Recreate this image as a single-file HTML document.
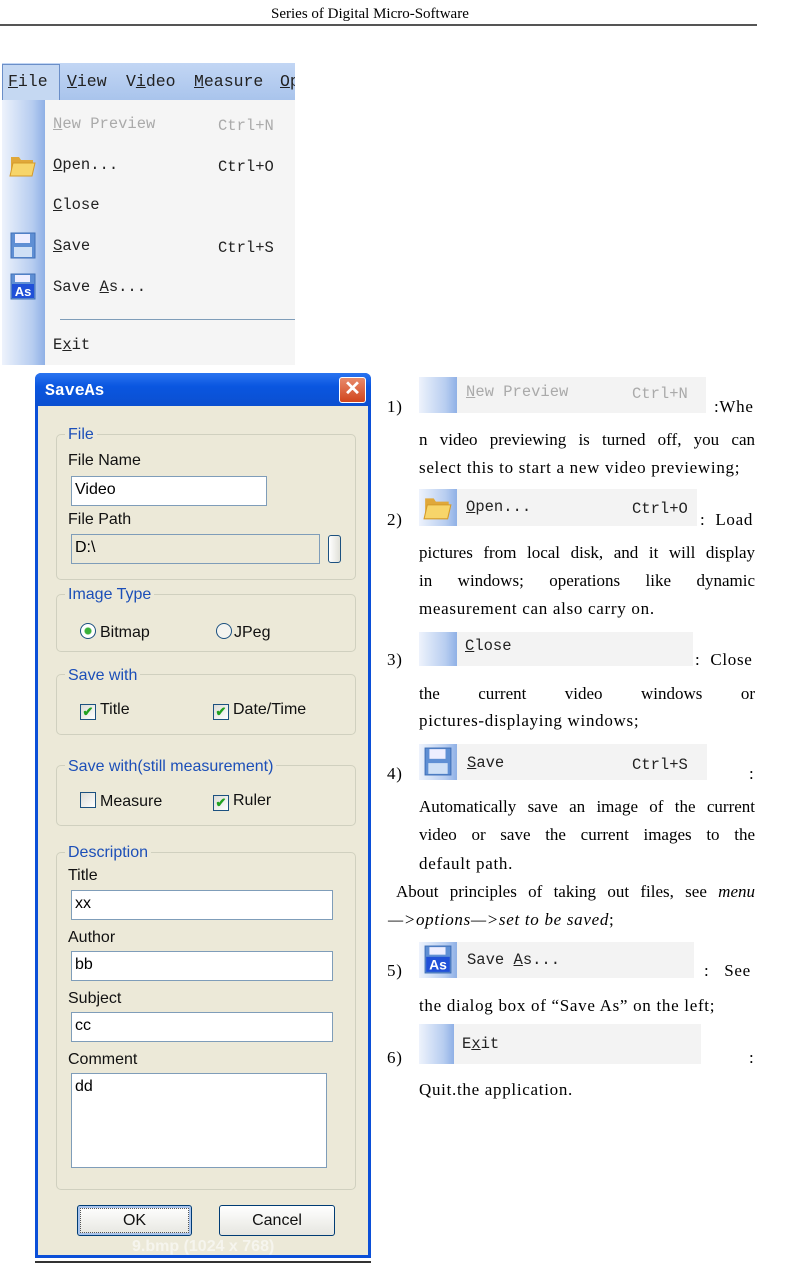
<!DOCTYPE html>
<html><head><meta charset="utf-8"><style>
*{margin:0;padding:0;box-sizing:border-box}
body{width:800px;height:1264px;background:#fff;position:relative;overflow:hidden;font-family:"Liberation Serif",serif;color:#000}
.a{position:absolute;white-space:nowrap}
.mono{font-family:"Liberation Mono",monospace;font-size:15.5px;color:#222}
.ser{font-family:"Liberation Serif",serif;font-size:17px;letter-spacing:0.7px}
.sans{font-family:"Liberation Sans",sans-serif;font-size:16px;color:#111}
.blue{color:#1c4fb8}
.grp{position:absolute;border:1px solid #d0d0bf;border-radius:5px}
.inp{position:absolute;background:#fff;border:1px solid #7f9db9;font-family:"Liberation Sans",sans-serif;font-size:16px;padding:4px 3px}
.strip{position:absolute;background:#f3f3f3}
.strip .l{position:absolute;left:0;top:0;bottom:0;width:38px;background:linear-gradient(90deg,#eef3fc,#b7cdf0 70%,#8fb0e6)}
.just{position:absolute;left:419px;width:336px;text-align:justify;text-align-last:justify;font-size:17px;white-space:nowrap}
.cb{display:inline-block;width:16px;height:16px;border:1px solid #1c5180;background:linear-gradient(135deg,#dcdcd6,#fff);vertical-align:-2px;margin-right:4px;position:relative}
</style></head><body>

<div class="a ser" style="left:271px;top:6px;font-size:15px;letter-spacing:0">Series of Digital Micro-Software</div>
<div class="a" style="left:0;top:24px;width:757px;height:2px;background:#555"></div>

<!-- File menu -->
<div class="a" style="left:2px;top:63px;width:293px;height:37px;background:linear-gradient(#c2d6f4,#a9c4ec)"></div>
<div class="a" style="left:2px;top:64px;width:58px;height:37px;background:#c5d8f2;border:1px solid #6b8fc8;border-bottom:none"></div>
<div class="a mono" style="left:8px;top:72px;font-size:16.5px"><u>F</u>ile</div>
<div class="a mono" style="left:67px;top:72px;font-size:16.5px"><u>V</u>iew</div>
<div class="a mono" style="left:126px;top:72px;font-size:16.5px">V<u>i</u>deo</div>
<div class="a mono" style="left:194px;top:72px;font-size:16.5px"><u>M</u>easure</div>
<div class="a mono" style="left:280px;top:72px;font-size:16.5px;width:15px;overflow:hidden"><u>O</u>p</div>
<div class="a" style="left:2px;top:100px;width:293px;height:265px;background:#f5f5f5"></div>
<div class="a" style="left:2px;top:100px;width:43px;height:265px;background:linear-gradient(90deg,#eef3fc,#b7cdf0 70%,#8fb0e6)"></div>
<div class="a mono" style="left:53px;top:115px;color:#aaa"><u>N</u>ew Preview</div>
<div class="a mono" style="left:218px;top:117px;color:#aaa">Ctrl+N</div>
<svg class="a" style="left:9px;top:151px" width="28" height="28" viewBox="0 0 28 28"><path d="M2 6h8l2 3h12v14H2z" fill="#e0a83a"/><path d="M4 12h22l-3 13H1z" fill="#f7d56a" stroke="#d49a2a"/></svg>
<div class="a mono" style="left:53px;top:156px"><u>O</u>pen...</div>
<div class="a mono" style="left:218px;top:158px">Ctrl+O</div>
<div class="a mono" style="left:53px;top:196px"><u>C</u>lose</div>
<svg class="a" style="left:10px;top:232px" width="26" height="27" viewBox="0 0 26 27"><rect x="1" y="1" width="24" height="25" fill="#5f8fd4" stroke="#4070b8"/><rect x="5" y="2" width="15" height="9" fill="#eef"/><rect x="4" y="15" width="18" height="10" fill="#cfe0f6"/></svg>
<div class="a mono" style="left:53px;top:237px"><u>S</u>ave</div>
<div class="a mono" style="left:218px;top:239px">Ctrl+S</div>
<svg class="a" style="left:10px;top:273px" width="26" height="27" viewBox="0 0 26 27"><rect x="1" y="1" width="24" height="25" fill="#5f8fd4" stroke="#4070b8"/><rect x="5" y="2" width="15" height="7" fill="#eef"/><rect x="2" y="11" width="22" height="14" fill="#2050d8"/><text x="13" y="23" font-family="Liberation Sans" font-weight="bold" font-size="13" fill="#fff" text-anchor="middle">As</text></svg>
<div class="a mono" style="left:53px;top:278px">Save <u>A</u>s...</div>
<div class="a" style="left:60px;top:319px;width:235px;height:1px;background:#7f9db9"></div>
<div class="a mono" style="left:53px;top:336px">E<u>x</u>it</div>

<!-- Dialog -->
<div class="a" style="left:35px;top:373px;width:336px;height:885px;background:#0b4fd8;border-radius:6px 6px 0 0"></div>
<div class="a" style="left:35px;top:373px;width:336px;height:33px;background:linear-gradient(#2a74f0,#0a56e0 40%,#0b4fd0);border-radius:6px 6px 0 0"></div>
<div class="a" style="left:45px;top:381px;color:#fff;font-family:'Liberation Mono',monospace;font-weight:bold;font-size:16.5px">SaveAs</div>
<div class="a" style="left:339px;top:377px;width:27px;height:26px;background:linear-gradient(#e88a6a,#d1451d);border:1px solid #fff;border-radius:3px;color:#fff;font:bold 20px/22px 'Liberation Sans',sans-serif;text-align:center">✕</div>
<div class="a" style="left:38px;top:406px;width:330px;height:849px;background:#ece9d8"></div>

<div class="grp" style="left:56px;top:434px;width:300px;height:146px"></div>
<div class="a sans blue" style="left:65px;top:426px;background:#ece9d8;padding:0 3px">File</div>
<div class="a sans" style="left:68px;top:452px">File Name</div>
<div class="inp" style="left:71px;top:476px;width:196px;height:30px">Video</div>
<div class="a sans" style="left:68px;top:511px">File Path</div>
<div class="inp" style="left:71px;top:534px;width:249px;height:30px;background:#ece9d8">D:\</div>
<div class="a" style="left:328px;top:535px;width:13px;height:28px;border:1px solid #1c5180;border-radius:3px;background:linear-gradient(90deg,#fff,#e0e0d8)"></div>

<div class="grp" style="left:56px;top:594px;width:300px;height:58px"></div>
<div class="a sans blue" style="left:65px;top:586px;background:#ece9d8;padding:0 3px">Image Type</div>
<div class="a sans" style="left:80px;top:623px"><span style="display:inline-block;width:16px;height:16px;border:1px solid #1c5180;border-radius:50%;background:radial-gradient(#3bb13b 0 3px,#fff 4px);vertical-align:-2px;margin-right:4px"></span>Bitmap</div>
<div class="a sans" style="left:216px;top:623px"><span style="display:inline-block;width:16px;height:16px;border:1px solid #1c5180;border-radius:50%;background:#f4f4f0;vertical-align:-2px;margin-right:2px"></span>JPeg</div>

<div class="grp" style="left:56px;top:674px;width:300px;height:61px"></div>
<div class="a sans blue" style="left:65px;top:667px;background:#ece9d8;padding:0 3px">Save with</div>
<div class="a sans" style="left:80px;top:701px"><span class="cb" style="color:#21a121;font:bold 13px/14px sans-serif;text-align:center">✔</span>Title</div>
<div class="a sans" style="left:213px;top:701px"><span class="cb" style="color:#21a121;font:bold 13px/14px sans-serif;text-align:center">✔</span>Date/Time</div>

<div class="grp" style="left:56px;top:765px;width:300px;height:61px"></div>
<div class="a sans blue" style="left:65px;top:758px;background:#ece9d8;padding:0 3px">Save with(still measurement)</div>
<div class="a sans" style="left:80px;top:792px"><span class="cb"></span>Measure</div>
<div class="a sans" style="left:213px;top:792px"><span class="cb" style="color:#21a121;font:bold 13px/14px sans-serif;text-align:center">✔</span>Ruler</div>

<div class="grp" style="left:56px;top:852px;width:300px;height:338px"></div>
<div class="a sans blue" style="left:65px;top:844px;background:#ece9d8;padding:0 3px">Description</div>
<div class="a sans" style="left:68px;top:867px">Title</div>
<div class="inp" style="left:71px;top:890px;width:262px;height:30px">xx</div>
<div class="a sans" style="left:68px;top:929px">Author</div>
<div class="inp" style="left:71px;top:951px;width:262px;height:30px">bb</div>
<div class="a sans" style="left:68px;top:990px">Subject</div>
<div class="inp" style="left:71px;top:1012px;width:262px;height:30px">cc</div>
<div class="a sans" style="left:68px;top:1051px">Comment</div>
<div class="inp" style="left:71px;top:1073px;width:256px;height:95px">dd</div>

<div class="a sans" style="left:77px;top:1205px;width:115px;height:31px;border:1px solid #003c74;border-radius:3px;background:linear-gradient(#fff,#e6e6e0);text-align:center;line-height:29px;outline:1px dotted #555;outline-offset:-4px;box-shadow:inset 0 0 0 2px #a9c4ec">OK</div>
<div class="a sans" style="left:219px;top:1205px;width:116px;height:31px;border:1px solid #003c74;border-radius:3px;background:linear-gradient(#fff,#e6e6e0);text-align:center;line-height:29px">Cancel</div>
<div class="a sans" style="left:132px;top:1238px;color:#f6f5ee;font-weight:bold">9.bmp (1024 x 768)</div>
<div class="a" style="left:35px;top:1261px;width:336px;height:2px;background:#333"></div>

<!-- Right column -->
<div class="strip" style="left:419px;top:377px;width:287px;height:36px"><div class="l"></div></div>
<div class="a mono" style="left:466px;top:383px;color:#aaa"><u>N</u>ew Preview</div>
<div class="a mono" style="left:632px;top:385px;color:#aaa">Ctrl+N</div>
<div class="a ser" style="left:387px;top:397px">1)</div>
<div class="a ser" style="left:714px;top:397px">:Whe</div>
<div class="just" style="top:430px">n video previewing is turned off, you can</div>
<div class="a ser" style="left:419px;top:458px">select this to start a new video previewing;</div>

<div class="strip" style="left:419px;top:489px;width:278px;height:37px"><div class="l"></div></div>
<svg class="a" style="left:423px;top:492px" width="30" height="30" viewBox="0 0 28 28"><path d="M2 6h8l2 3h12v14H2z" fill="#e0a83a"/><path d="M4 12h22l-3 13H1z" fill="#f7d56a" stroke="#d49a2a"/></svg>
<div class="a mono" style="left:466px;top:498px"><u>O</u>pen...</div>
<div class="a mono" style="left:632px;top:500px">Ctrl+O</div>
<div class="a ser" style="left:387px;top:510px">2)</div>
<div class="a ser" style="left:700px;top:510px">:&nbsp; Load</div>
<div class="just" style="top:543px">pictures from local disk, and it will display</div>
<div class="just" style="top:571px">in windows; operations like dynamic</div>
<div class="a ser" style="left:419px;top:599px">measurement can also carry on.</div>

<div class="strip" style="left:419px;top:632px;width:274px;height:34px"><div class="l"></div></div>
<div class="a mono" style="left:465px;top:637px"><u>C</u>lose</div>
<div class="a ser" style="left:387px;top:650px">3)</div>
<div class="a ser" style="left:695px;top:650px">:&nbsp; Close</div>
<div class="just" style="top:684px">the current video windows or</div>
<div class="a ser" style="left:419px;top:711px">pictures-displaying windows;</div>

<div class="strip" style="left:419px;top:744px;width:288px;height:36px"><div class="l"></div></div>
<svg class="a" style="left:424px;top:747px" width="28" height="29" viewBox="0 0 26 27"><rect x="1" y="1" width="24" height="25" fill="#5f8fd4" stroke="#4070b8"/><rect x="5" y="2" width="15" height="9" fill="#eef"/><rect x="4" y="15" width="18" height="10" fill="#cfe0f6"/></svg>
<div class="a mono" style="left:467px;top:754px"><u>S</u>ave</div>
<div class="a mono" style="left:632px;top:756px">Ctrl+S</div>
<div class="a ser" style="left:387px;top:764px">4)</div>
<div class="a ser" style="left:749px;top:764px">:</div>
<div class="just" style="top:797px">Automatically save an image of the current</div>
<div class="just" style="top:825px">video or save the current images to the</div>
<div class="a ser" style="left:419px;top:854px">default path.</div>
<div class="a ser" style="left:396px;top:882px;width:359px;text-align:justify;text-align-last:justify;letter-spacing:0">About principles of taking out files, see <i>menu</i></div>
<div class="a ser" style="left:388px;top:910px"><i>—&gt;options—&gt;set to be saved</i>;</div>

<div class="strip" style="left:419px;top:942px;width:275px;height:36px"><div class="l"></div></div>
<svg class="a" style="left:424px;top:945px" width="28" height="29" viewBox="0 0 26 27"><rect x="1" y="1" width="24" height="25" fill="#5f8fd4" stroke="#4070b8"/><rect x="5" y="2" width="15" height="7" fill="#eef"/><rect x="2" y="11" width="22" height="14" fill="#2050d8"/><text x="13" y="23" font-family="Liberation Sans" font-weight="bold" font-size="13" fill="#fff" text-anchor="middle">As</text></svg>
<div class="a mono" style="left:467px;top:951px">Save <u>A</u>s...</div>
<div class="a ser" style="left:387px;top:961px">5)</div>
<div class="a ser" style="left:704px;top:961px">:&nbsp;&nbsp; See</div>
<div class="a ser" style="left:419px;top:996px">the dialog box of “Save As” on the left;</div>

<div class="strip" style="left:419px;top:1024px;width:282px;height:40px"><div class="l" style="width:35px"></div></div>
<div class="a mono" style="left:462px;top:1035px">E<u>x</u>it</div>
<div class="a ser" style="left:387px;top:1048px">6)</div>
<div class="a ser" style="left:749px;top:1048px">:</div>
<div class="a ser" style="left:419px;top:1080px">Quit.the application.</div>

</body></html>
